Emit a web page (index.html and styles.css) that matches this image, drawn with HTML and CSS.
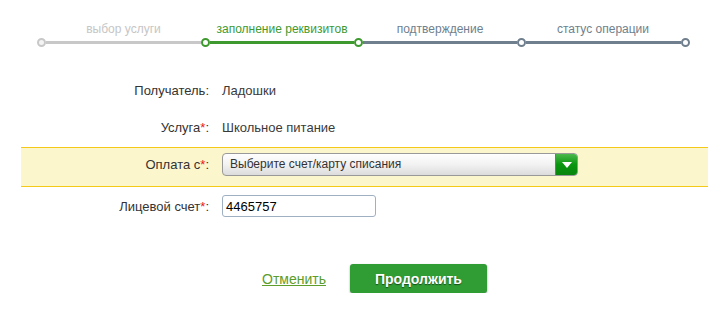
FILE: index.html
```html
<!DOCTYPE html>
<html>
<head>
	<meta charset="UTF-8">
	<title>Оплата</title>
<link rel="stylesheet" href="styles.css">
</head>
<body>

<div class="page">

	<div class="steps">
		<div class="step done" style="width: 164px">
			<div class="step-label">выбор услуги</div>
			<div class="step-track"><span class="dot"></span><span class="line"></span></div>
		</div>
		<div class="step current" style="width: 153px">
			<div class="step-label">заполнение реквизитов</div>
			<div class="step-track"><span class="dot"></span><span class="line"></span></div>
		</div>
		<div class="step next" style="width: 163px">
			<div class="step-label">подтверждение</div>
			<div class="step-track"><span class="dot green"></span><span class="line"></span></div>
		</div>
		<div class="step next last" style="width: 173px">
			<div class="step-label">статус операции</div>
			<div class="step-track"><span class="dot"></span><span class="line"></span><span class="dot"></span></div>
		</div>
	</div>

	<div class="form">
		<div class="row">
			<div class="label">Получатель:</div>
			<div class="value">Ладошки</div>
		</div>
		<div class="row">
			<div class="label">Услуга<span class="req">*</span>:</div>
			<div class="value">Школьное питание</div>
		</div>
		<div class="row band">
			<div class="label">Оплата с<span class="req">*</span>:</div>
			<div class="value">
				<div class="select">
					<span class="select-text">Выберите счет/карту списания</span>
					<span class="select-btn"><span class="arrow"></span></span>
				</div>
			</div>
		</div>
		<div class="row input-row">
			<div class="label">Лицевой счет<span class="req">*</span>:</div>
			<div class="value"><input class="field" type="text" value="4465757"></div>
		</div>
	</div>

	<div class="actions">
		<a href="#" class="cancel">Отменить</a>
		<button type="button" class="go">Продолжить</button>
	</div>

</div>

</body>
</html>
```

FILE: styles.css
```css
body {
	margin: 0;
	background: #fff;
	font-family: "Liberation Sans", Arial, sans-serif;
	color: #333;
}
.page {
	width: 687px;
	margin-left: 21px;
	padding-top: 21px;
}

/* шаги */
.steps {
	display: flex;
	margin-left: 16px;
}
.step-label {
	font-size: 12px;
	line-height: 16px;
	height: 16px;
	padding-left: 9px;
	text-align: center;
	white-space: nowrap;
}
.last .step-label { padding-right: 10px; }
.step-track {
	display: flex;
	align-items: center;
	height: 9px;
	margin-top: 1px;
}
.dot {
	width: 9px;
	height: 9px;
	box-sizing: border-box;
	border: 2px solid #c8c8c8;
	border-radius: 50%;
	background: #f4f4f4;
	flex: none;
}
.line {
	flex: 1;
	height: 3px;
	background: #c8c8c8;
}
.done .step-label { color: #c6c6c6; }
.current .step-label { color: #3e9a2f; }
.current .line { background: #3e9a2f; }
.current .dot, .dot.green { border-color: #3e9a2f; background: #fff; }
.next .step-label { color: #6f7f8d; }
.next .line { background: #6f7f8d; }
.next .dot { border-color: #6f7f8d; background: #fff; }
.next .dot.green { border-color: #3e9a2f; }

/* форма */
.form {
	margin-top: 25px;
	font-size: 13px;
}
.row {
	display: flex;
	align-items: center;
	height: 37px;
}
.label {
	width: 188px;
	text-align: right;
	padding-right: 13px;
}
.req { color: #e8191e; }
.value { color: #3a3a3a; }

.band {
	height: auto;
	margin-top: 1px;
	padding: 5px 0 10px;
	background: #fcf6cd;
	border-top: 1px solid #f4c918;
	border-bottom: 1px solid #f4c918;
	align-items: flex-start;
}
.band .label { line-height: 23px; }
.select {
	display: flex;
	width: 356px;
	height: 23px;
	box-sizing: border-box;
	border: 1px solid #999;
	border-radius: 4px;
	overflow: hidden;
	background: linear-gradient(#fefefe, #f2f2f2 50%, #dcdcdc);
}
.select-text {
	flex: 1;
	padding-left: 7px;
	line-height: 21px;
	font-size: 12px;
	color: #333;
}
.select-btn {
	width: 21px;
	display: flex;
	align-items: center;
	justify-content: center;
	background: linear-gradient(#4cb84c, #0a960f 50%, #08860c);
	border-left: 1px solid #5a8a5a;
}
.arrow {
	width: 0;
	height: 0;
	border-left: 5px solid transparent;
	border-right: 5px solid transparent;
	border-top: 6px solid #fff;
	margin-top: 1px;
}

.input-row {
	height: 22px;
	margin-top: 8px;
}
.field {
	width: 154px;
	height: 22px;
	box-sizing: border-box;
	border: 1px solid #9fb0c2;
	border-radius: 3px;
	padding: 0 3px;
	font-family: "Liberation Sans", Arial, sans-serif;
	font-size: 13px;
	color: #000;
}

/* кнопки */
.actions {
	display: flex;
	align-items: center;
	margin-top: 47px;
	padding-left: 241px;
	gap: 24px;
}
.cancel {
	font-size: 14px;
	color: #5c9d2b;
	text-decoration: underline;
}
.go {
	width: 137px;
	height: 29px;
	border: none;
	border-radius: 3px;
	background: #2f9c34;
	box-shadow: 0 1px 2px rgba(0, 0, 0, 0.4);
	font-family: "Liberation Sans", Arial, sans-serif;
	font-size: 14px;
	font-weight: bold;
	color: #fff;
	text-shadow: 0 1px 1px rgba(0, 0, 0, 0.5);
}
```
